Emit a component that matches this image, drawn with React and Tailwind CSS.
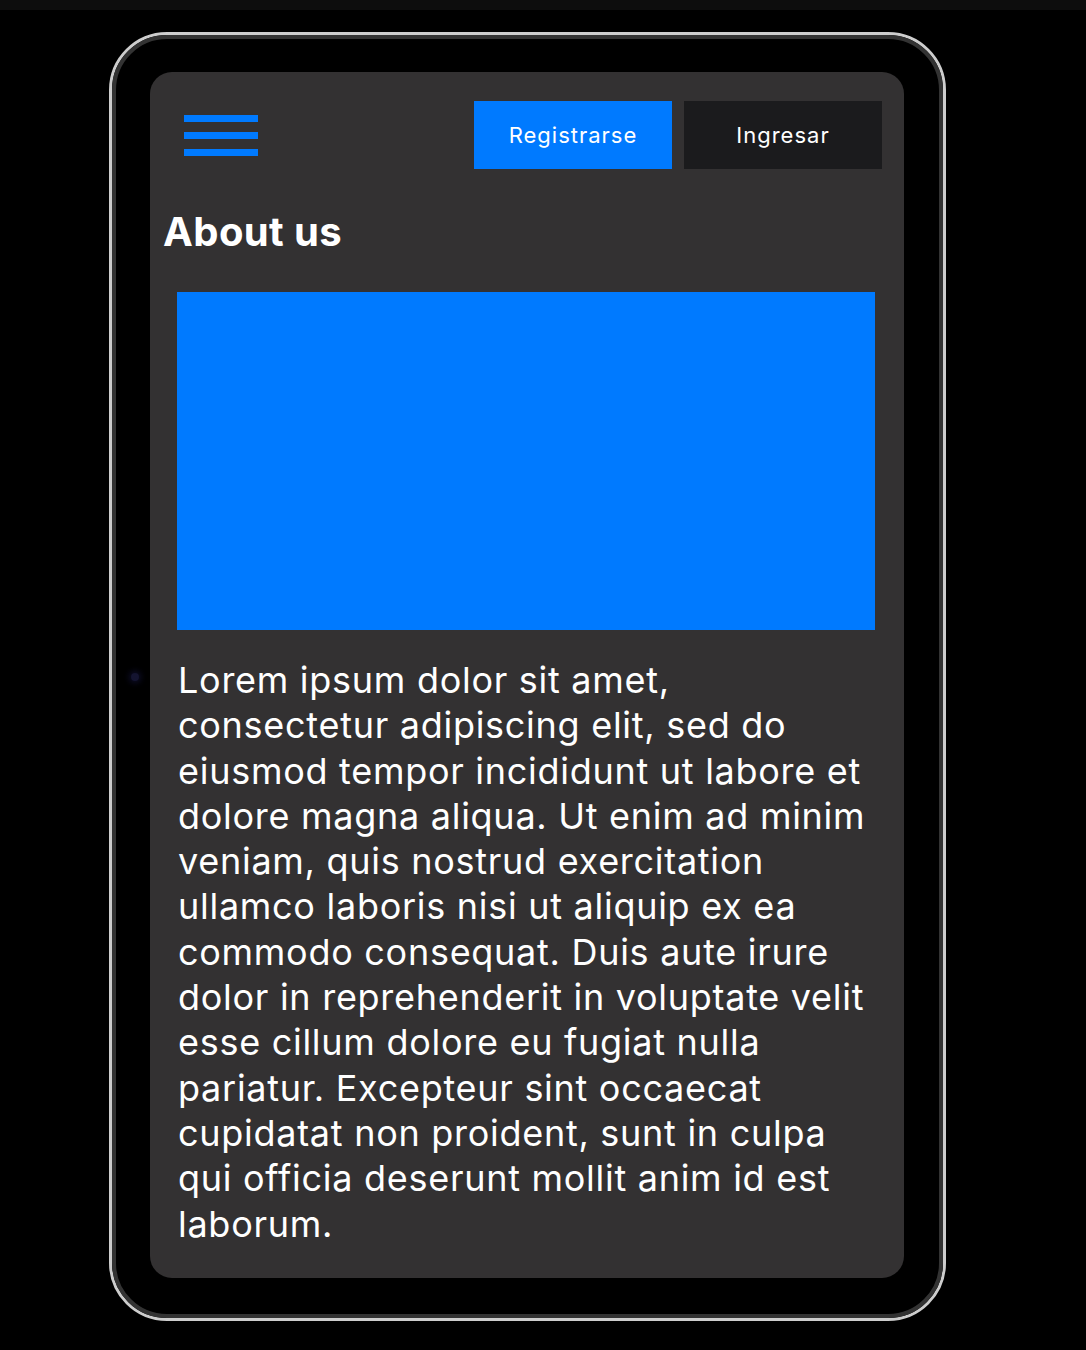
export default function App() {
    const font = { fontFamily: "Inter, 'Noto Sans', sans-serif" };

    return (
        <div className="min-h-[1350px] w-[1086px] bg-black" style={font}>
            {/* Top strip */}
            <div className="h-[10px] bg-[#0d0d0d]" />

            {/* Device */}
            <div className="ml-[109px] mt-[22px] w-[837px] h-[1289px] rounded-[58px] border-[3px] border-[#cdcdcd] bg-black relative">
                <div className="h-full w-full rounded-[55px] border-[4px] border-[#333] bg-black px-[34px] pt-[33px]">
                    {/* Camera */}
                    <div className="absolute left-[19px] top-[638px] w-[8px] h-[8px] rounded-full bg-[#141430] shadow-[0_0_6px_2px_rgba(40,40,120,0.35)]" />

                    {/* Screen */}
                    <div className="h-[1206px] w-[754px] rounded-[22px] bg-[#333132] text-white">
                        {/* Header */}
                        <div className="flex items-center justify-between pl-[34px] pr-[22px] pt-[29px]">
                            <button className="flex flex-col gap-[10px] w-[74px]">
                                <span className="block h-[7px] bg-[#007aff]" />
                                <span className="block h-[7px] bg-[#007aff]" />
                                <span className="block h-[7px] bg-[#007aff]" />
                            </button>
                            <div className="flex gap-[12px]">
                                <button className="w-[198px] h-[68px] bg-[#007aff] text-[22px] tracking-[0.045em] text-white">
                                    Registrarse
                                </button>
                                <button className="w-[198px] h-[68px] bg-[#1b1b1d] text-[22px] tracking-[0.045em] text-white">
                                    Ingresar
                                </button>
                            </div>
                        </div>

                        {/* Title */}
                        <h1 className="pl-[13px] mt-[39px] text-[40px] leading-[48px] tracking-[0.01em] font-bold text-white">
                            About us
                        </h1>

                        {/* Image placeholder */}
                        <div className="ml-[27px] mt-[36px] w-[698px] h-[338px] bg-[#007aff]" />

                        {/* Body */}
                        <p className="ml-[28px] mt-[28px] w-[700px] text-[36px] leading-[45.3px] tracking-[0.02em] text-white">
                            Lorem ipsum dolor sit amet, consectetur adipiscing elit, sed do eiusmod tempor incididunt ut labore et dolore magna aliqua. Ut enim ad minim veniam, quis nostrud exercitation ullamco laboris nisi ut aliquip ex ea commodo consequat. Duis aute irure dolor in reprehenderit in voluptate velit esse cillum dolore eu fugiat nulla pariatur. Excepteur sint occaecat cupidatat non proident, sunt in culpa qui officia deserunt mollit anim id est laborum.
                        </p>
                    </div>
                </div>
            </div>
        </div>
    );
}
